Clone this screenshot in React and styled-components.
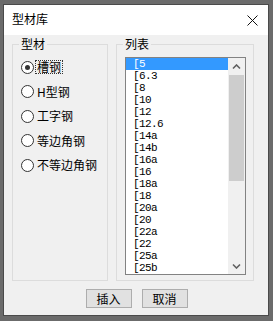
import React from 'react';
import styled, { createGlobalStyle, css } from 'styled-components';

const GlobalStyle = createGlobalStyle`
  html, body {
    margin: 0;
    padding: 0;
    background: #6b6b6b;
  }
  body {
    font-family: 'Noto Sans CJK SC', 'Noto Sans', sans-serif;
    font-size: 12px;
    color: #000;
  }
`

const Backdrop = styled.div`
  width: 273px;
  height: 321px;
  box-sizing: border-box;
  padding: 4px 0 0 3px;
`

const Window = styled.div`
  width: 266px;
  height: 312px;
  box-sizing: border-box;
  border: 1px solid #4a4a4a;
  background: #f0f0f0;
  display: flex;
  flex-direction: column;
`

const TitleBar = styled.div`
  height: 30px;
  flex: none;
  background: #fff;
  display: flex;
  align-items: center;
  justify-content: space-between;
  padding-left: 8px;
`

const Title = styled.span`
  font-size: 12px;
  line-height: 14px;
  margin-top: -2px;
`

const CloseButton = styled.div`
  width: 32px;
  height: 30px;
  display: flex;
  align-items: center;
  justify-content: center;
`

const Content = styled.div`
  display: flex;
  gap: 8px;
  padding: 2px 0 0 8px;
`

const Group = styled.fieldset`
  margin: 0;
  padding: 0 6px;
  min-width: 0;
  width: ${p => p.w}px;
  height: 244px;
  box-sizing: border-box;
  border: 1px solid #dcdcdc;
  display: flex;
  flex-direction: column;
`

const Legend = styled.legend`
  padding: 0 2px;
  font-size: 12px;
  line-height: 14px;
`

const RadioList = styled.div`
  padding: 4px 0 0 2px;
  display: flex;
  flex-direction: column;
`

const RadioRow = styled.div`
  height: 24.5px;
  display: flex;
  align-items: center;
  gap: 1px;
`

const Circle = styled.span`
  width: 13px;
  height: 13px;
  box-sizing: border-box;
  border: 1px solid #333;
  border-radius: 50%;
  background: #fff;
  display: flex;
  align-items: center;
  justify-content: center;
  &::after {
    content: '';
    width: 5px;
    height: 5px;
    border-radius: 50%;
    background: ${p => (p.checked ? '#333' : 'transparent')};
  }
`

const RadioLabel = styled.span`
  font-size: 12px;
  line-height: 12px;
  padding: 0 1px;
  border: 1px dotted transparent;
  ${p => p.focus && css`
    border-color: #333;
  `}
`

const ListBox = styled.div`
  margin: 6px 0 0 2px;
  width: 121px;
  height: 218px;
  box-sizing: border-box;
  border: 1px solid #828282;
  background: #fff;
  display: flex;
`

const Items = styled.div`
  flex: 1;
  display: flex;
  flex-direction: column;
  overflow: hidden;
`

const Item = styled.div`
  height: 12px;
  flex: none;
  padding-left: 7px;
  font-family: 'Liberation Mono', 'DejaVu Sans Mono', monospace;
  font-size: 11px;
  letter-spacing: -0.6px;
  line-height: 12px;
  color: ${p => (p.selected ? '#fff' : '#000')};
  background: ${p => (p.selected ? '#3399ff' : 'transparent')};
`

const ScrollBar = styled.div`
  width: 17px;
  flex: none;
  background: #f0f0f0;
  display: flex;
  flex-direction: column;
`

const Arrow = styled.div`
  height: 17px;
  flex: none;
  display: flex;
  align-items: center;
  justify-content: center;
`

const Track = styled.div`
  flex: 1;
`

const Thumb = styled.div`
  margin: 0 1px;
  height: 106px;
  background: #cdcdcd;
`

const Buttons = styled.div`
  display: flex;
  justify-content: center;
  gap: 10px;
  margin-top: 8px;
  padding-left: 1px;
`

const Button = styled.button`
  width: 46px;
  height: 19px;
  padding: 0;
  box-sizing: border-box;
  border: 1px solid #adadad;
  background: #e1e1e1;
  font-family: 'Noto Sans CJK SC', sans-serif;
  font-size: 12px;
  line-height: 14px;
  color: #000;
`

const types = ['槽钢', 'H型钢', '工字钢', '等边角钢', '不等边角钢']
const sizes = ['5', '6.3', '8', '10', '12', '12.6', '14a', '14b', '16a', '16', '18a', '18', '20a', '20', '22a', '22', '25a', '25b']

function Chevron({ down }) {
  return (
    <svg width="9" height="6" viewBox="0 0 9 6">
      <path
        d={down ? 'M1 1.5 L4.5 5 L8 1.5' : 'M1 4.5 L4.5 1 L8 4.5'}
        fill="none"
        stroke="#606060"
        strokeWidth="1.6"
      />
    </svg>
  )
}

export default function App() {
  return (
    <>
      <GlobalStyle />
      <Backdrop>
        <Window>
          <TitleBar>
            <Title>型材库</Title>
            <CloseButton>
              <svg width="11" height="11" viewBox="0 0 11 11">
                <path d="M0.5 0.5 L10.5 10.5 M10.5 0.5 L0.5 10.5" stroke="#111" strokeWidth="1" />
              </svg>
            </CloseButton>
          </TitleBar>
          <Content>
            <Group w={96}>
              <Legend>型材</Legend>
              <RadioList>
                {types.map((t, i) => (
                  <RadioRow key={t}>
                    <Circle checked={i === 0} />
                    <RadioLabel focus={i === 0}>{t}</RadioLabel>
                  </RadioRow>
                ))}
              </RadioList>
            </Group>
            <Group w={138}>
              <Legend>列表</Legend>
              <ListBox>
                <Items>
                  {sizes.map((s, i) => (
                    <Item key={s} selected={i === 0}>[{s}</Item>
                  ))}
                </Items>
                <ScrollBar>
                  <Arrow><Chevron /></Arrow>
                  <Track><Thumb /></Track>
                  <Arrow><Chevron down /></Arrow>
                </ScrollBar>
              </ListBox>
            </Group>
          </Content>
          <Buttons>
            <Button>插入</Button>
            <Button>取消</Button>
          </Buttons>
        </Window>
      </Backdrop>
    </>
  )
}
